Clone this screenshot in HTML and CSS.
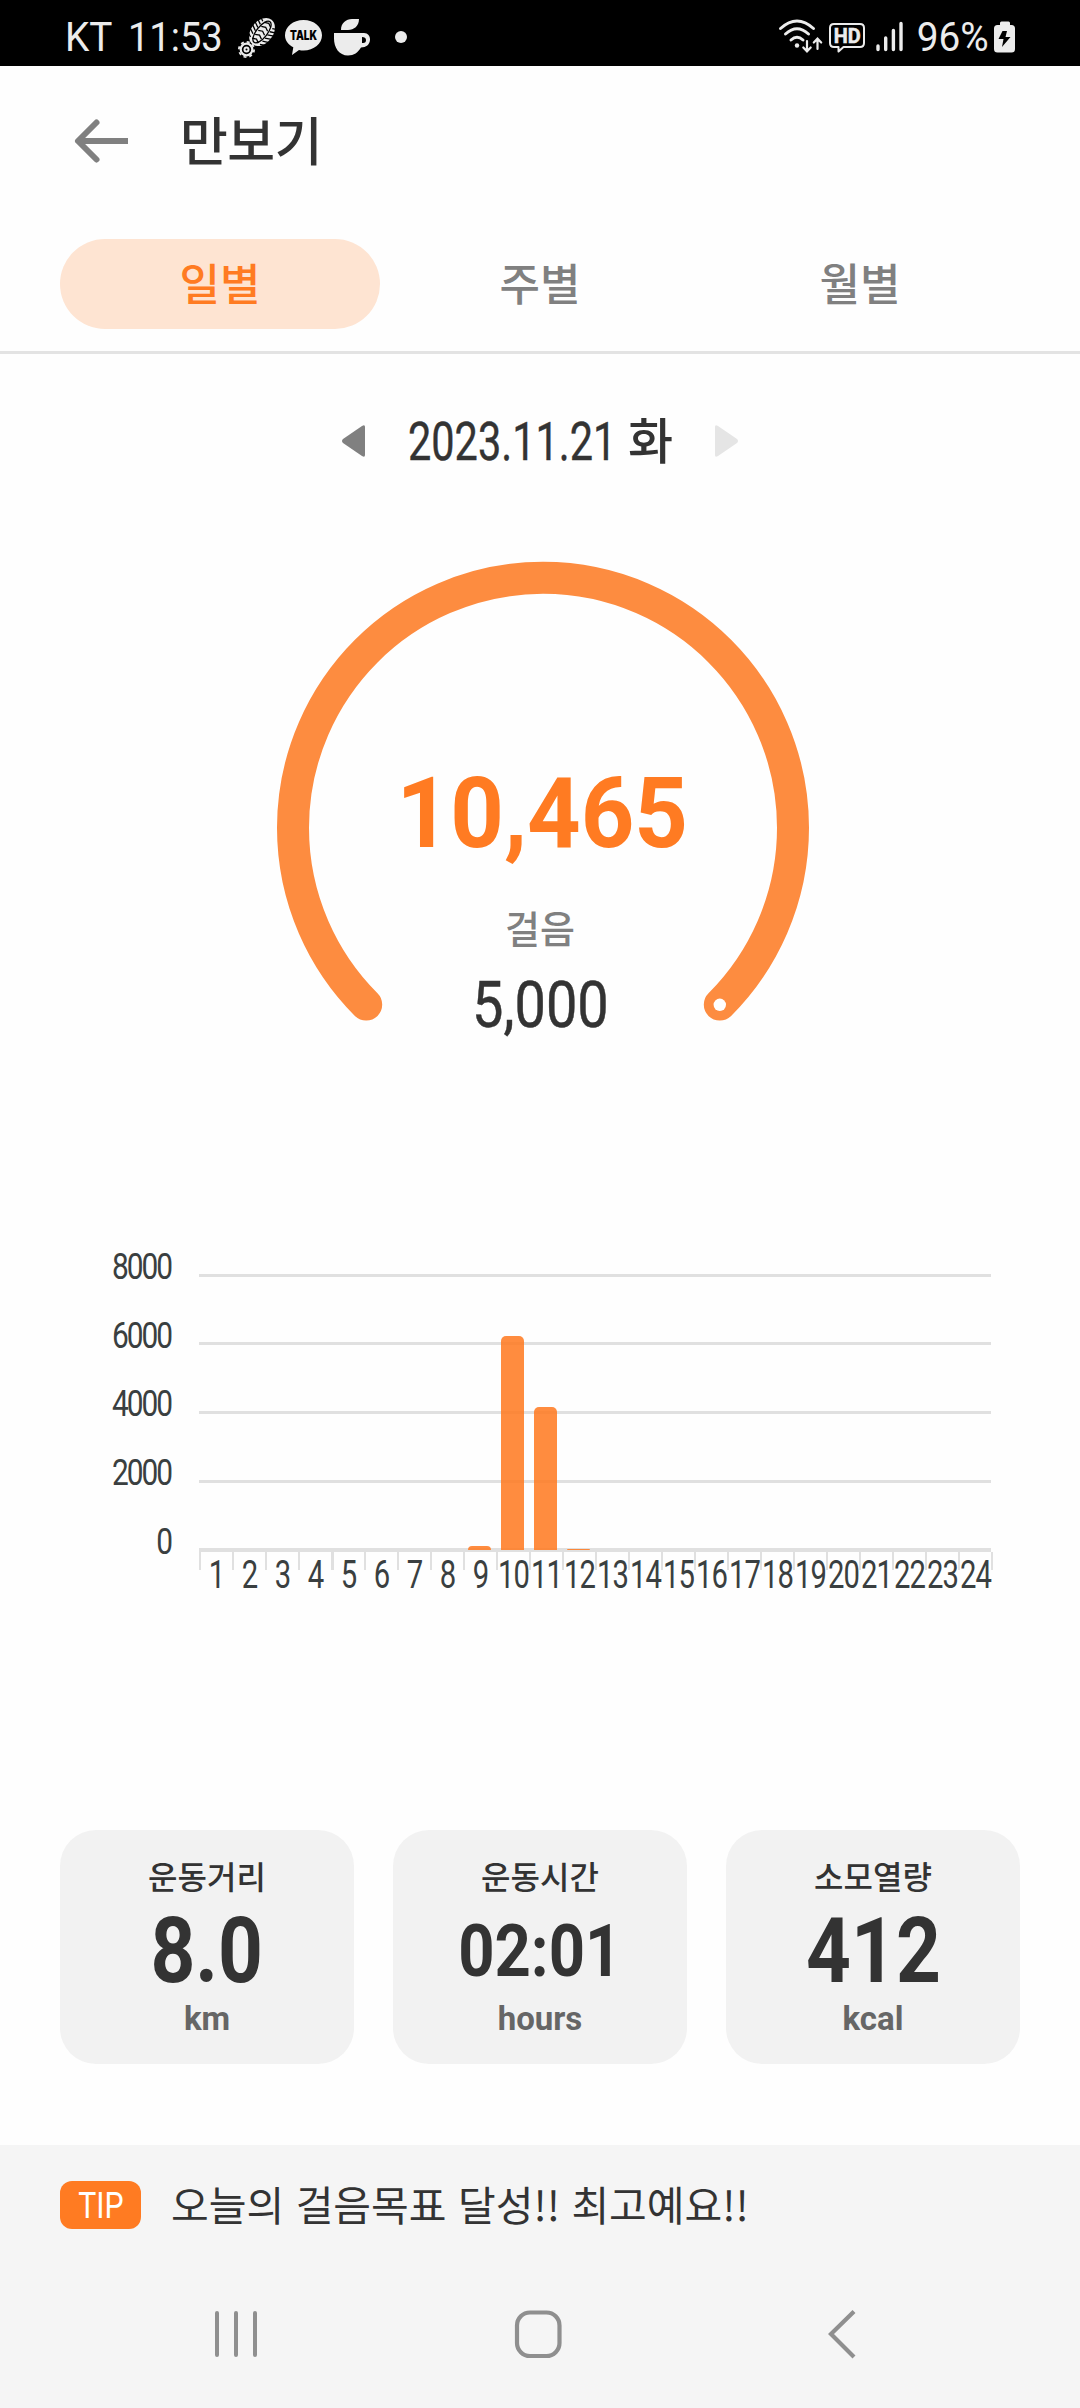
FILE: index.html
```html
<!DOCTYPE html>
<html lang="ko">
<head>
<meta charset="utf-8">
<title>만보기</title>
<link rel="stylesheet" href="styles.css">
</head>
<body>
<div class="status">
  <span class="carrier">KT</span><span class="clock">11:53</span>
  <svg class="status-left" width="180" height="66" viewBox="232 0 180 66" fill="#ececec">
    <g transform="rotate(38 262 32)">
      <ellipse cx="262" cy="32" rx="11" ry="15.500"/>
      <g stroke="#000" stroke-width="1.300" fill="none">
        <path d="M250 20l6 3M250 24l6 3M250 28l6 3M250 32l6 3M250 36l6 3M250 40l6 3M274 20l-6 3M274 24l-6 3M274 28l-6 3M274 32l-6 3M274 36l-6 3M274 40l-6 3"/>
        <path d="M258 23l4-2 4 2M258 28l4-2 4 2M258 33l4-2 4 2M258 38l4-2 4 2M258 43l4-2 4 2"/>
        <ellipse cx="262" cy="32" rx="5.500" ry="13"/>
      </g>
    </g>
    <g fill="none" stroke="#ececec">
      <circle cx="246.500" cy="49.500" r="5.800" stroke-width="2.200"/>
      <circle cx="246.500" cy="49.500" r="7.600" stroke-width="1.800" stroke-dasharray="3 2.970"/>
      <circle cx="246.500" cy="49.500" r="2" stroke-width="2"/>
    </g>
    <path d="M303.500 20c10.500 0 18.500 6.800 18.500 15.200S314 50.400 303.500 50.400c-1.600 0-3-.1-4.500-.5L292 55l1.300-7.700C288.300 44.700 285 40.300 285 35.200 285 26.800 293 20 303.500 20z"/>
    <text class="talk" x="303.500" y="40.300" text-anchor="middle" fill="#000" textLength="27" lengthAdjust="spacingAndGlyphs">TALK</text>
    <path d="M341 30c0-7 5-11 11-11h7c0 7-5 11-11 11zM334 33h30c4 0 6 3 6 6.500 0 5-4 8-9 8-3 5-7 8-13 8-9 0-14-8-14-17zM362 37v6c3 .5 4-1 4-3s-1.500-3-4-3z" fill-rule="evenodd"/>
    <circle cx="401" cy="37" r="6"/>
  </svg>
  <svg class="status-right" width="130" height="66" viewBox="776 0 130 66" fill="none" stroke="#ececec" stroke-linecap="round">
    <path d="M780.500 28.500q16.500-15 33 0M785.500 34q11.500-10.500 23 0M791 40q6-5.500 12 0" stroke-width="3"/>
    <circle cx="797" cy="45.500" r="2.200" fill="#ececec" stroke="none"/>
    <path d="M807 41v10m-3.700-3.500L807 51.300l3.700-3.800M817.500 49V39m-3.700 3.500 3.700-3.800 3.700 3.800" stroke-width="2.200"/>
    <path d="M834 24h26q4 0 4 4v15q0 4-4 4h-16.500l-5 4.500V47H834q-4 0-4-4V28q0-4 4-4z" stroke-width="2" stroke-linejoin="round"/>
    <text class="hd" x="847.300" y="42.700" text-anchor="middle" fill="#ececec" stroke="#ececec" stroke-width=".5" textLength="27" lengthAdjust="spacingAndGlyphs">HD</text>
    <path d="M878 46v3.500M885.700 38v11.500M893.400 30.500v19M901 23.500v26" stroke-width="3.400"/>
  </svg>
  <span class="percent">96%</span>
  <svg class="battery" width="22" height="66" viewBox="996 0 22 66">
    <path d="M1002 25v-2q0-1.500 1.500-1.500h7q1.500 0 1.500 1.500v2h1.500q3.500 0 3.500 3.500V49q0 3.500-3.500 3.500h-14q-3.500 0-3.500-3.500V28.500q0-3.500 3.500-3.500z" fill="#ececec"/>
    <path d="M1004.500 31h4.500l-1.500 6h5l-8.500 10 1.500-8h-5z" fill="#000"/>
  </svg>
</div>

<header class="header">
  <svg class="back" width="60" height="50" viewBox="70 116 60 50" fill="none" stroke="#808080" stroke-width="6">
    <path d="M128 141H79"/><path d="M96.500 122.500 78 141l18.500 18.500" stroke-linecap="round" stroke-linejoin="round"/>
  </svg>
  <h1 class="title">만보기</h1>
</header>

<nav class="tabs">
  <span class="tab tab-on">일별</span>
  <span class="tab">주별</span>
  <span class="tab">월별</span>
</nav>

<div class="date">
  <svg width="25" height="34" viewBox="0 0 25 34"><path d="M24 3v28q0 3-3 1L2 19q-2-2 0-4L21 2q3-2 3 1z" fill="#808080"/></svg>
  <div class="date-label"><span class="date-num">2023.11.21</span><span class="date-day">화</span></div>
  <svg width="25" height="34" viewBox="0 0 25 34"><path d="M1 3v28q0 3 3 1l19-13q2-2 0-4L4 2Q1 0 1 3z" fill="#e5e5e5"/></svg>
</div>

<section class="gauge">
  <svg class="ring" width="540" height="480" viewBox="273 550 540 480">
    <path d="M366.200 1004.600A250 250 0 1 1 719.800 1004.600" fill="none" stroke="#fd8c40" stroke-width="32" stroke-linecap="round"/>
    <circle cx="719.800" cy="1004.800" r="6.200" fill="#fff"/>
  </svg>
  <div class="gauge-text">
    <span class="steps">10,465</span>
    <span class="steps-unit">걸음</span>
    <span class="goal">5,000</span>
  </div>
</section>

<section class="chart">
  <div class="y-axis"><span>8000</span><span>6000</span><span>4000</span><span>2000</span><span>0</span></div>
  <div class="plot">
    <div class="grid">
      <i></i><i></i><i></i><i></i>
      <div class="bars">
        <b class="bar" style="height:4px"></b><b class="bar" style="height:214px"></b><b class="bar" style="height:143px"></b><b class="bar" style="height:1px"></b>
      </div>
    </div>
    <div class="x-axis">
      <span>1</span><span>2</span><span>3</span><span>4</span><span>5</span><span>6</span><span>7</span><span>8</span><span>9</span><span>10</span><span>11</span><span>12</span><span>13</span><span>14</span><span>15</span><span>16</span><span>17</span><span>18</span><span>19</span><span>20</span><span>21</span><span>22</span><span>23</span><span>24</span>
    </div>
  </div>
</section>

<section class="cards">
  <div class="card"><span class="card-name">운동거리</span><span class="card-value">8.0</span><span class="card-unit">km</span></div>
  <div class="card"><span class="card-name">운동시간</span><span class="card-value card-time">02:01</span><span class="card-unit">hours</span></div>
  <div class="card"><span class="card-name">소모열량</span><span class="card-value">412</span><span class="card-unit">kcal</span></div>
</section>

<footer class="footer">
  <div class="tip"><span class="tip-tag"><span>TIP</span></span><span class="tip-text">오늘의 걸음목표 달성!! 최고예요!!</span></div>
  <div class="nav">
    <svg width="50" height="56" viewBox="211 2306 50 56" stroke="#8f8f8f" stroke-width="4" stroke-linecap="round"><path d="M217 2313v42M236 2313v42M255 2313v42"/></svg>
    <svg width="56" height="56" viewBox="510 2306 56 56"><rect x="517" y="2312.500" width="42.500" height="43.500" rx="13" fill="none" stroke="#8f8f8f" stroke-width="4.200"/></svg>
    <svg width="50" height="56" viewBox="820 2306 50 56" fill="none" stroke="#8f8f8f" stroke-width="4.200"><path d="M854 2311.500 831 2334l23 23"/></svg>
  </div>
</footer>
</body>
</html>
```
FILE: styles.css
```css
* { box-sizing: border-box; }
body {
  margin: 0;
  width: 1080px;
  height: 2408px;
  overflow: hidden;
  background: #fefefe;
  color: #333;
  font-family: Roboto, "Noto Sans CJK KR", sans-serif;
}
svg { display: block; flex: none; }

.status { display: flex; height: 66px; background: #000; color: #ececec; font-size: 40px; line-height: 75px; padding-left: 65px; }
.carrier { width: 63px; transform: scaleX(.97); transform-origin: 0 50%; }
.clock { width: 104px; transform: scaleX(.95); transform-origin: 0 50%; }
.status-right { margin-left: 364px; }
.percent { width: 80px; padding-left: 11px; transform: scaleX(.97); transform-origin: 0 50%; }
.battery { margin-left: 8px; }
.talk { font: 900 13px Inter, sans-serif; }
.hd { font: 700 19.500px Roboto, sans-serif; }

.header { display: flex; align-items: center; height: 150px; padding-left: 70px; }
.title { margin: 0 0 4px 50px; font: 500 52px/60px "Noto Sans CJK KR", sans-serif; letter-spacing: -0.500px; }

.tabs { display: flex; height: 138px; padding: 23px 60px 0; border-bottom: 3px solid #e3e3e3; }
.tab { width: 320px; height: 90px; border-radius: 45px; text-align: center; font: 500 44px/87px "Noto Sans CJK KR", sans-serif; color: #808080; }
.tab-on { background: #fee4d2; color: #ff7b22; }

.date { display: flex; align-items: center; justify-content: center; height: 174px; gap: 42px; }
.date-label { display: flex; align-items: center; width: 264px; height: 60px; }
.date-num { width: 220px; font-size: 53.500px; transform: scaleX(.775); transform-origin: 0 50%; white-space: nowrap; -webkit-text-stroke: .4px; }
.date-day { font: 500 49px/60px "Noto Sans CJK KR", sans-serif; margin-top: -6px; }

.gauge { display: grid; justify-content: center; height: 702px; padding: 22px 0 0 6px; }
.ring, .gauge-text { grid-area: 1 / 1; }
.gauge-text { display: flex; flex-direction: column; align-items: center; padding: 204px 6px 0 0; line-height: 120px; }
.steps { height: 120px; padding-left: 4px; font-size: 98.500px; font-weight: 700; color: #ff7b22; transform: scaleX(.95); }
.steps-unit { height: 52px; margin-top: 27px; font: 500 38px/52px "Noto Sans CJK KR", sans-serif; color: #808080; }
.goal { height: 80px; line-height: 80px; margin-top: 12px; font-size: 65px; transform: scaleX(.86); -webkit-text-stroke: .5px; }

.chart { display: flex; height: 600px; }
.y-axis { width: 171px; color: #3a3f40; font-size: 36px; text-align: right; padding-top: 3px; }
.y-axis span { display: block; height: 68.700px; line-height: 68.700px; letter-spacing: -2.500px; transform: scaleX(.83); transform-origin: 100% 50%; }
.plot { width: 792px; margin-left: 28px; padding-top: 43.500px; }
.grid { position: relative; height: 278.500px; border-bottom: 4px solid #e0e0e0; }
.grid i { display: block; height: 68.700px; border-top: 3px solid #e0e0e0; }
.bars { position: absolute; left: 269px; bottom: -2px; display: flex; align-items: flex-end; gap: 10px; }
.bar { width: 23px; background: #ff7b22; opacity: .87; border-radius: 5px 5px 0 0; }
.x-axis { display: grid; grid-template-columns: repeat(24, 33px); height: 40px; color: #3a3f40; font-size: 39px; line-height: 46px;
  background: repeating-linear-gradient(90deg, #e0e0e0 0 2.500px, transparent 2.500px 33px) 0 0 / 794.500px 18px no-repeat; width: 794.500px; }
.x-axis span { display: flex; justify-content: center; padding-left: 3px; letter-spacing: -1px; transform: scaleX(.75); }

.cards { display: flex; gap: 39px; padding: 0 60px; height: 315px; }
.card { display: flex; flex-direction: column; align-items: center; width: 294px; height: 234px; border-radius: 36px; background: #f2f2f2; }
.card-name { height: 44px; margin-top: 23px; font: 500 32px/44px "Noto Sans CJK KR", sans-serif; }
.card-value { height: 90px; margin-top: 10px; line-height: 90px; font-size: 90px; font-weight: 700; transform: scaleX(.87); }
.card-time { font-size: 72px; transform: scaleX(.88); }
.card-unit { height: 40px; margin-top: 2px; line-height: 40px; font-size: 33px; font-weight: 700; color: #666; }

.footer { height: 263px; background: #f5f5f5; padding-top: 36px; }
.tip { display: flex; padding-left: 60px; height: 48px; }
.tip-tag { width: 81px; height: 48px; border-radius: 12px; background: #ff7b22; color: #fff; font-size: 36px; line-height: 50px; text-align: center; }
.tip-tag span { display: inline-block; transform: scaleX(.84); }
.tip-text { margin-left: 30px; font: 400 41px/44px "Noto Sans CJK KR", sans-serif; white-space: nowrap; }
.nav { display: flex; padding: 77px 0 0 211px; }
.nav svg:nth-child(2) { margin-left: 249px; }
.nav svg:nth-child(3) { margin-left: 254px; }
```
